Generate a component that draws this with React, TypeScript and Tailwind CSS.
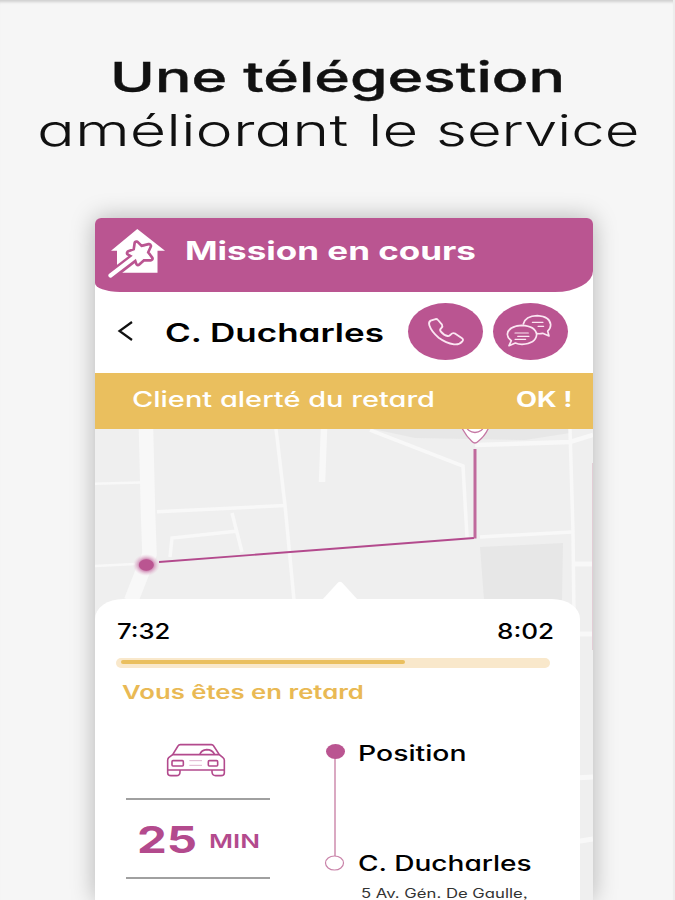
import type { ReactNode } from 'react'
import { clsx } from 'clsx'

interface WideProps { children: ReactNode; className?: string }

// Wide-set label: the type is stretched horizontally from its left edge
function Wide({ children, className }: WideProps) {
  return (
    <span className={clsx('block w-max origin-left whitespace-nowrap leading-none', className)}>
      {children}
    </span>
  )
}

function HouseLogo() {
  const star = 'M28.5 15.5 L33 20 L41 18 L38 24.5 L42.5 30.5 L35 30.5 L30 35 L28 29 L21 25 L27.5 22.5 Z'
  return (
    <svg width="58" height="50" viewBox="0 0 58 50" fill="none">
      <path d="M29.3 1 L57 22.7 H49.5 V44.7 H9 V22.7 H3 Z" fill="#fff" />
      <path d="M0 36 L9 28 V44.7 H15 L9 50 H0 Z" fill="#ba5591" />
      <path d="M3 47.5 L27 29" stroke="#ba5591" strokeWidth="9.5" />
      <path d={star} fill="#ba5591" stroke="#ba5591" strokeWidth="6.5" strokeLinejoin="round" />
      <path d={star} fill="#fff" stroke="#fff" strokeWidth="1.2" strokeLinejoin="round" />
      <path d="M2.5 47.5 L28 28" stroke="#fff" strokeWidth="4.2" strokeLinecap="round" />
    </svg>
  )
}

function PhoneIcon() {
  return (
    <svg width="75" height="57" viewBox="0 0 225 171" fill="none" stroke="#fbe6f2" strokeWidth="5.5" strokeLinejoin="round" strokeLinecap="round">
      <path d="M80 49 Q86 46 90 51 L102 65 Q105 70 100 75 Q94 80 98 85 Q108 97 119 99 Q124 100 128 95 Q134 88 142 92 L161 105 Q168 110 163 115 Q154 126 138 124 Q114 120 92 104 Q70 86 64 67 Q61 57 68 53 Z" />
    </svg>
  )
}

function ChatIcon() {
  return (
    <svg width="75" height="57" viewBox="0 0 225 171" fill="none" stroke="#fbe6f2" strokeWidth="5" strokeLinejoin="round" strokeLinecap="round">
      <path d="M91 63 Q97 39 133 38 Q171 41 173 65 Q173 76 164 84 L168 99 L149 91 Q141 93 133 92" />
      <path d="M55 113 Q43 104 43 94 Q46 69 86 67 Q128 69 131 95 Q128 122 87 124 Q76 124 67 120 L48 128 Z" />
      <path d="M118 58 H150 M135 70 H152 M66 90 H106 M74 100 H108 M66 109 H98" strokeWidth="3.5" />
    </svg>
  )
}

function CarIcon() {
  return (
    <svg width="60" height="35" viewBox="242 460 180 105" fill="none" stroke="#b34a8d" strokeWidth="4.8" strokeLinejoin="round">
      <path d="M262 495 L278 469 Q280 465 285 465 H378 Q383 465 385 469 L402 495 Z" />
      <path d="M262 495 L250 504 Q247 507 247 512 V541 H417 V512 Q417 507 413 504 L402 495" />
      <path d="M247 541 V550 Q247 558 257 558 H273 Q284 558 284 547 V541 M380 541 V547 Q381 558 391 558 H407 Q417 558 417 550 V541" />
      <path d="M343 495 Q348 481 364 480 Q381 480 388 495" />
      <rect x="260" y="513" width="34" height="16" rx="3" />
      <rect x="369" y="513" width="28" height="16" rx="3" />
      <path d="M312 513 H350 M312 527 H350" strokeWidth="2.5" stroke="#d9a3c4" />
    </svg>
  )
}

function StreetMap() {
  return (
    <svg className="absolute inset-0" width="498" height="471" viewBox="0 0 498 471" fill="none">
      <defs>
        <radialGradient id="halo">
          <stop offset="0.45" stopColor="#c26ba0" />
          <stop offset="1" stopColor="#e9c4da" stopOpacity="0" />
        </radialGradient>
      </defs>

      {/* Blocks */}
      <path d="M278 0 H475 V4 L430 11 L320 9 Z M385 118 L468 114 L467 171 H389 Z" fill="#e7e7e7" />

      {/* Streets */}
      <g stroke="#f8f8f8" strokeWidth="3.5">
        <path d="M51 0 L53 83 L54.5 125 L36 172" strokeWidth="14.5" />
        <path d="M229 0 L227 53" strokeWidth="6.5" />
        <path d="M0 54.7 L45 53.5 M0 137 L40 135" strokeWidth="2.5" />
        <path d="M62 82.7 L190 76.5" />
        <path d="M181 0 L190 76 L199 171" />
        <path d="M137 84 L147 123 M75 128 L77 109 L143 102" />
        <path d="M275 1 L368 37 L372 108" />
        <path d="M380 16 L475 13 L498 6" strokeWidth="4.5" />
        <path d="M475 0 L478 103 L479 190" />
        <path d="M385 108 L477 103" />
        <path d="M479 135 H498 M479 205 H498 M479 349 L498 348 M479 413 L498 410" strokeWidth="5" />
      </g>

      {/* Route */}
      <path d="M64 133 L379 109" stroke="#b34a8d" strokeWidth="1.8" />
      <path d="M380 20 V109.5" stroke="#c06a9d" strokeWidth="3" />
      <ellipse cx="51.3" cy="136" rx="13.5" ry="11" fill="url(#halo)" />
      <ellipse cx="51.3" cy="136" rx="7.5" ry="5.7" fill="#ba5591" />

      {/* Destination pin */}
      <path d="M367 -1 Q371 7 377 12.5 Q380 15.5 383 12.5 Q390 7 393.5 -1" fill="#fff" stroke="#c577a4" strokeWidth="1.3" />
      <ellipse cx="380" cy="-3" rx="8.5" ry="6.5" stroke="#c577a4" strokeWidth="1.3" />
      <path d="M497.5 34 V221" stroke="#e2cdd5" />
    </svg>
  )
}

function Steps() {
  return (
    <svg width="22" height="130" viewBox="0 0 22 130" fill="none">
      <path d="M11 14 V114" stroke="#d194b3" strokeWidth="1.6" />
      <ellipse cx="11.5" cy="8.5" rx="9.5" ry="7.5" fill="#ba5591" />
      <ellipse cx="10.5" cy="120" rx="9" ry="7" fill="#fff" stroke="#c983a9" strokeWidth="1.2" />
    </svg>
  )
}

export default function App() {
  return (
    <main className="flex h-[900px] w-[675px] flex-col overflow-hidden border-r-2 border-[#ededed] bg-[#f6f6f6] font-['Inter','Liberation_Sans',sans-serif] text-[#111] shadow-[inset_0_4px_3px_-2px_#cfcfcf] [font-feature-settings:'cv11','ss03']">
      <h1 className="h-[218px] shrink-0 pt-[57px]">
        <Wide className="ml-[110px] scale-x-[1.48] text-[41px] font-medium [-webkit-text-stroke:0.4px]">Une télégestion</Wide>
        <span className="ml-[37px] mt-[10px] flex text-[44px] font-light">
          <span className="w-[331px]"><Wide className="scale-x-[1.43]">améliorant</Wide></span>{' '}
          <span className="w-[68px]"><Wide className="scale-x-[1.4]">le</Wide></span>{' '}
          <Wide className="scale-x-[1.36]">service</Wide>
        </span>
      </h1>

      <section className="ml-[95px] flex w-[498px] grow flex-col rounded-t-md bg-white shadow-[0_0_24px_rgba(0,0,0,0.28)]">
        <header className="flex h-[74px] shrink-0 items-start bg-[#ba5591] pl-[13px] pt-[10px] text-white [border-radius:6px_6px_38px_25px/6px_6px_21px_9px]">
          <HouseLogo />
          <Wide className="ml-[19px] mt-[11px] scale-x-[1.4] text-[25px] font-bold">Mission en cours</Wide>
        </header>

        <div className="flex h-[81px] shrink-0 items-start pt-[11px]">
          <svg className="ml-[22px] mt-[17px]" width="18" height="22" viewBox="0 0 18 22" fill="none" stroke="#111" strokeWidth="2.2">
            <path d="M15 2 L2.5 11 L15 20" />
          </svg>
          <div className="ml-[30px] mt-[18px] w-[243px] text-black">
            <Wide className="scale-x-[1.4] text-[25px] font-semibold">C. Ducharles</Wide>
          </div>
          <button aria-label="Appeler" className="h-[57px] w-[75px] rounded-[50%] bg-[#ba5591]"><PhoneIcon /></button>
          <button aria-label="Messages" className="ml-[10px] h-[57px] w-[75px] rounded-[50%] bg-[#ba5591]"><ChatIcon /></button>
        </div>

        <div className="flex h-14 shrink-0 items-start bg-[#eabf5e] pt-4 text-[21px] text-white">
          <div className="ml-[37px] w-[384px]">
            <Wide className="scale-x-[1.38] font-medium">Client alerté du retard</Wide>
          </div>
          <Wide className="scale-x-[1.3] font-bold">OK !</Wide>
        </div>

        <div className="relative grow bg-[#efefef]">
          <StreetMap />
          <div className="relative mt-[170px] h-[301px] w-[485px] bg-white pt-[22px] text-black [border-radius:28px_28px_0_0/20px_20px_0_0]">
            <svg className="absolute -top-[18px] left-[225px]" width="40" height="19" viewBox="0 0 40 19" fill="#fff">
              <path d="M2 19 L18 1.5 Q20 0 22 1.5 L38 19 Z" />
            </svg>

            <div className="flex text-[21px] font-medium">
              <div className="ml-[22px] w-[380px]">
                <Wide className="scale-x-[1.22]">7:32</Wide>
              </div>
              <Wide className="scale-x-[1.24]">8:02</Wide>
            </div>

            <div className="ml-[21px] mt-[16px] h-[10px] w-[434px] rounded-full bg-[#f9e8cb] px-[5px] pt-[2px]">
              <div className="h-[4px] w-[284px] rounded-full bg-[#eabf5e]" />
            </div>

            <Wide className="ml-[27px] mt-[15px] scale-x-[1.39] text-[18.5px] font-semibold text-[#e9b954]">Vous êtes en retard</Wide>

            <div className="mt-[40px] flex">
              <div className="ml-[31px] flex w-[144px] flex-col text-[#b34a8d]">
                <div className="ml-[40px] h-[56px] pt-px"><CarIcon /></div>
                <div className="flex h-[81px] items-start border-y-2 border-[#a0a0a0] pt-[21px]">
                  <div className="ml-[11px] w-[72px]">
                    <Wide className="scale-x-[1.28] text-[37px] font-bold">25</Wide>
                  </div>
                  <Wide className="mt-[11px] scale-x-[1.37] text-[19px] font-semibold">MIN</Wide>
                </div>
              </div>
              <div className="ml-[54px] mt-[1px]"><Steps /></div>
              <div className="ml-[12px] mt-px text-[21px] font-medium">
                <Wide className="scale-x-[1.35]">Position</Wide>
                <Wide className="mt-[89px] scale-x-[1.335]">C. Ducharles</Wide>
                <Wide className="ml-[3px] mt-[14px] scale-x-[1.335] text-[12.5px] font-normal text-[#333]">5 Av. Gén. De Gaulle,</Wide>
              </div>
            </div>
          </div>
        </div>
      </section>
    </main>
  )
}
